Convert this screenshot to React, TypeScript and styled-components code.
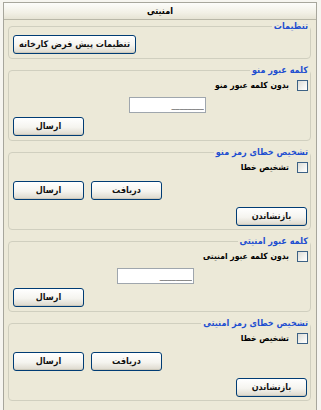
import styled, { createGlobalStyle } from "styled-components";

const GlobalStyle = createGlobalStyle`
    html, body {
        margin: 0;
        padding: 0;
        background: #f6f5f0;
    }
    body {
        font-family: "DejaVu Sans Condensed", "DejaVu Sans", sans-serif;
        font-size: 9px;
        color: #000;
    }
`

function App() {
    return (
        <>
            <GlobalStyle />
            <Panel dir="rtl">
                <Header>امنیتی</Header>
                <Body>
                    <Group>
                        <Legend>تنظیمات</Legend>
                        <Row $top={3} $bottom={4} $end>
                            <Button $width={123}>تنظیمات پیش فرض کارخانه</Button>
                        </Row>
                    </Group>

                    <Group>
                        <Legend>کلمه عبور منو</Legend>
                        <CheckGrid $top={4}>
                            <CheckLabel>
                                <Check type="checkbox" />
                                بدون کلمه عبور منو
                            </CheckLabel>
                            <span />
                            <span />
                            <Field readOnly value="________" />
                        </CheckGrid>
                        <Row $top={4} $bottom={4} $end>
                            <Button>ارسال</Button>
                        </Row>
                    </Group>

                    <Group>
                        <Legend>تشخیص خطای رمز منو</Legend>
                        <CheckGrid $top={4}>
                            <CheckLabel>
                                <Check type="checkbox" />
                                تشخیص خطا
                            </CheckLabel>
                        </CheckGrid>
                        <Row $top={8} $end>
                            <Button>دریافت</Button>
                            <Button>ارسال</Button>
                        </Row>
                        <Row $top={7} $bottom={3}>
                            <Button>بازنشاندن</Button>
                        </Row>
                    </Group>

                    <Group>
                        <Legend>کلمه عبور امنیتی</Legend>
                        <CheckGrid $top={4}>
                            <CheckLabel>
                                <Check type="checkbox" />
                                بدون کلمه عبور امنیتی
                            </CheckLabel>
                            <span />
                            <span />
                            <Field readOnly value="________" />
                        </CheckGrid>
                        <Row $top={4} $bottom={4} $end>
                            <Button>ارسال</Button>
                        </Row>
                    </Group>

                    <Group>
                        <Legend>تشخیص خطای رمز امنیتی</Legend>
                        <CheckGrid $top={4}>
                            <CheckLabel>
                                <Check type="checkbox" />
                                تشخیص خطا
                            </CheckLabel>
                        </CheckGrid>
                        <Row $top={8} $end>
                            <Button>دریافت</Button>
                            <Button>ارسال</Button>
                        </Row>
                        <Row $top={7} $bottom={3}>
                            <Button>بازنشاندن</Button>
                        </Row>
                    </Group>
                </Body>
            </Panel>
        </>
    )
}

const Panel = styled.div`
    margin: 2px 4px 0 3px;
    min-height: 420px;
    background: #ece9d8;
    border: 1px solid #a7a69c;
    border-bottom: none;
`

const Header = styled.div`
    height: 16px;
    line-height: 16px;
    text-align: center;
    font-weight: bold;
    background: linear-gradient(#fcfcfa, #f2f0e6 60%, #e6e3d4);
    border-bottom: 1px solid #b9b7a8;
`

const Body = styled.div`
    display: flex;
    flex-direction: column;
    gap: 5px;
    padding: 0 5px 0 4px;
`

const Group = styled.fieldset`
    margin: 0;
    padding: 0 3px 0 4px;
    border: 1px solid #d0cfbf;
    border-radius: 4px;
    min-width: 0;
`

const Legend = styled.legend`
    padding: 0 2px;
    margin-right: -3px;
    color: #1f4fd0;
    font-size: 9px;
    font-weight: bold;
    line-height: 12px;
    height: 12px;
`

const Row = styled.div<{ $top?: number; $bottom?: number; $end?: boolean }>`
    display: flex;
    gap: 7px;
    justify-content: ${p => (p.$end ? "flex-end" : "flex-start")};
    margin-top: ${p => p.$top ?? 0}px;
    margin-bottom: ${p => p.$bottom ?? 0}px;
`

const Button = styled.button<{ $width?: number }>`
    width: ${p => p.$width ?? 71}px;
    height: 19px;
    padding: 0;
    font-family: inherit;
    font-size: 9px;
    font-weight: bold;
    line-height: 17px;
    white-space: nowrap;
    color: #111;
    border: 1px solid #003c74;
    border-radius: 3px;
    background: linear-gradient(#ffffff, #f5f4ef 55%, #dcd8cc);
    box-shadow: inset 0 -1px 0 #cdc9bc;
`

const CheckGrid = styled.div<{ $top?: number }>`
    display: grid;
    grid-template-columns: auto auto;
    justify-content: start;
    column-gap: 9px;
    row-gap: 6px;
    margin-top: ${p => p.$top ?? 0}px;
`

const CheckLabel = styled.label`
    display: flex;
    align-items: center;
    gap: 8px;
    font-size: 8.5px;
    font-weight: bold;
    height: 11px;
    line-height: 11px;
    margin-right: -1px;
`

const Check = styled.input`
    appearance: none;
    margin: 0;
    width: 11px;
    height: 11px;
    border: 1px solid #3d6285;
    background: linear-gradient(135deg, #dcdcd6, #f7f7f4 70%, #ffffff);
`

const Field = styled.input`
    box-sizing: border-box;
    width: 77px;
    height: 16px;
    padding: 0 1px;
    border: 1px solid #9fa6ad;
    background: #fff;
    font-family: inherit;
    font-size: 9px;
    color: #555;
    text-align: right;
    direction: rtl;
    outline: none;
`

export default App;
